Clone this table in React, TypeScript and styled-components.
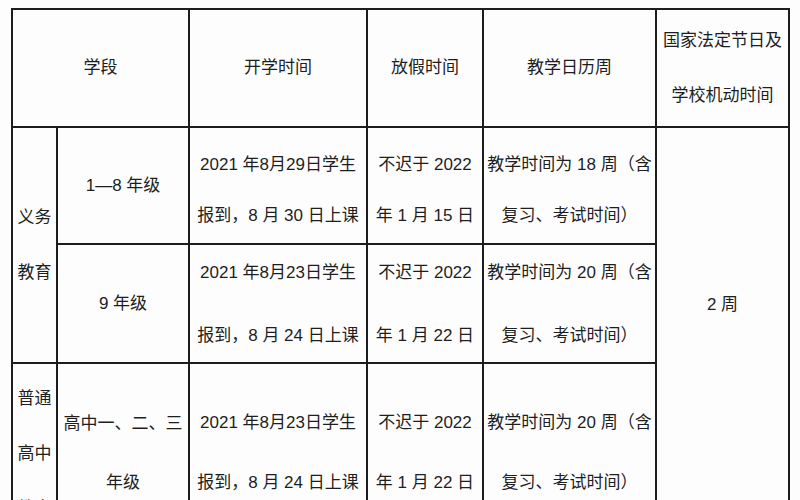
import * as React from 'react'
import styled, { createGlobalStyle } from 'styled-components'

type Row = {
  stage?: { lines: string[]; span: number; lh: number }
  grade: string[]
  gradeLh: number
  start: string[]
  end: string[]
  weeks: string[]
  lh: number
  shift: number
}

const rows: Row[] = [
  {
    stage: { lines: ['义务', '教育'], span: 2, lh: 55 },
    grade: ['1—8 年级'],
    gradeLh: 24,
    start: ['2021 年8月29日学生', '报到，8 月 30 日上课'],
    end: ['不迟于 2022', '年 1 月 15 日'],
    weeks: ['教学时间为 18 周（含', '复习、考试时间）'],
    lh: 51,
    shift: 8,
  },
  {
    grade: ['9 年级'],
    gradeLh: 24,
    start: ['2021 年8月23日学生', '报到，8 月 24 日上课'],
    end: ['不迟于 2022', '年 1 月 22 日'],
    weeks: ['教学时间为 20 周（含', '复习、考试时间）'],
    lh: 63,
    shift: 0,
  },
  {
    stage: { lines: ['普通', '高中', '教育'], span: 1, lh: 55 },
    grade: ['高中一、二、三', '年级'],
    gradeLh: 59,
    start: ['2021 年8月23日学生', '报到，8 月 24 日上课'],
    end: ['不迟于 2022', '年 1 月 22 日'],
    weeks: ['教学时间为 20 周（含', '复习、考试时间）'],
    lh: 60,
    shift: 0,
  },
]

export default function App() {
  return (
    <>
      <GlobalStyle />
      <Sheet>
        <Cell $col="1 / 3" $lh={24}>
          <Line>学段</Line>
        </Cell>
        <Cell $lh={24}>
          <Line>开学时间</Line>
        </Cell>
        <Cell $lh={24}>
          <Line>放假时间</Line>
        </Cell>
        <Cell $lh={24}>
          <Line>教学日历周</Line>
        </Cell>
        <Cell $lh={55}>
          <Line>国家法定节日及</Line>
          <Line>学校机动时间</Line>
        </Cell>

        {rows.map((r, i) => (
          <React.Fragment key={i}>
            {r.stage && (
              <Cell $row={`span ${r.stage.span}`} $lh={r.stage.lh}>
                {r.stage.lines.map((t) => (
                  <Line key={t}>{t}</Line>
                ))}
              </Cell>
            )}
            <Cell $lh={r.gradeLh}>
              {r.grade.map((t) => (
                <Line key={t}>{t}</Line>
              ))}
            </Cell>
            <Cell $lh={r.lh} $shift={r.shift}>
              {r.start.map((t) => (
                <Line key={t}>{t}</Line>
              ))}
            </Cell>
            <Cell $lh={r.lh} $shift={r.shift}>
              {r.end.map((t) => (
                <Line key={t}>{t}</Line>
              ))}
            </Cell>
            <Cell $lh={r.lh} $shift={r.shift}>
              {r.weeks.map((t) => (
                <Line key={t}>{t}</Line>
              ))}
            </Cell>
            {i === 0 && (
              <HolidayCell>
                <Line>2 周</Line>
              </HolidayCell>
            )}
          </React.Fragment>
        ))}
      </Sheet>
    </>
  )
}

const GlobalStyle = createGlobalStyle`
  html, body {
    margin: 0;
    height: 500px;
    overflow: hidden;
    background: #fdfdfd;
  }
`

const Sheet = styled.div`
  display: grid;
  grid-template-columns: 43px 130px 176px 114px 171px 131px;
  grid-template-rows: 116px 115px 117px 178px;
  gap: 2px;
  padding: 2px;
  width: max-content;
  margin: 8px 0 0 11px;
  background: #1d1d1d;
  font-family: 'Liberation Sans', 'Noto Sans CJK SC', sans-serif;
  font-size: 17px;
  color: #1e1e1e;
`

const Cell = styled.div<{ $col?: string; $row?: string; $lh: number; $shift?: number }>`
  grid-column: ${(p) => p.$col ?? 'auto'};
  grid-row: ${(p) => p.$row ?? 'auto'};
  display: flex;
  flex-direction: column;
  align-items: center;
  justify-content: center;
  padding-top: ${(p) => p.$shift ?? 0}px;
  background: #fdfdfd;
  line-height: ${(p) => p.$lh}px;
  text-align: center;
`

const HolidayCell = styled.div`
  grid-column: 6;
  grid-row: 2 / 5;
  display: flex;
  align-items: center;
  justify-content: center;
  padding-bottom: 60px;
  background: #fdfdfd;
  line-height: 24px;
`

const Line = styled.span`
  white-space: nowrap;
`
